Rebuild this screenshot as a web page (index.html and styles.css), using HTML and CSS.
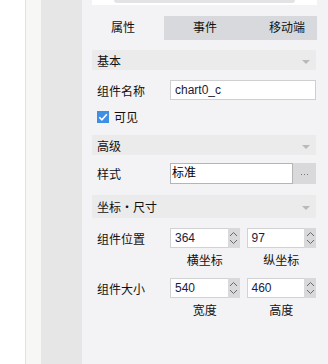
FILE: index.html
```html
<!DOCTYPE html>
<html>
<head>
<meta charset="utf-8">
<link rel="stylesheet" href="styles.css">
</head>
<body>
<div class="gutter"></div>
<div class="rail"></div>
<div class="side"></div>
<div class="panel">
  <div class="topbox"><div class="topbar"></div></div>
  <div class="tabs">
    <div class="tab active">属性</div>
    <div class="tab">事件</div>
    <div class="tab">移动端</div>
  </div>
  <div class="content">
    <div class="section h20"><span>基本</span><i class="tri"></i></div>
    <div class="row r-name">
      <div class="label">组件名称</div>
      <div class="input">chart0_c</div>
    </div>
    <div class="check-row">
      <span class="checkbox"><svg width="12" height="12" viewBox="0 0 12 12"><path d="M2.3 6.2 L4.9 8.8 L9.8 3.2" fill="none" stroke="#fff" stroke-width="1.6"/></svg></span>
      <span>可见</span>
    </div>
    <div class="section h20 s-adv"><span>高级</span><i class="tri"></i></div>
    <div class="row r-style">
      <div class="label">样式</div>
      <div class="input dark">标准</div>
      <div class="more"><i></i><i></i><i></i></div>
    </div>
    <div class="section h23 s-coord"><span>坐标・尺寸</span><i class="tri"></i></div>
    <div class="row r-num">
      <div class="label">组件位置</div>
      <div class="pair">
        <div class="num"><div class="val">364</div><div class="spin"><svg width="9" height="18" viewBox="0 0 9 18"><path d="M1 7 L4.5 3.5 L8 7 M1 11 L4.5 14.5 L8 11" fill="none" stroke="#6a6a6a" stroke-width="1"/></svg></div></div>
        <div class="num"><div class="val">97</div><div class="spin"><svg width="9" height="18" viewBox="0 0 9 18"><path d="M1 7 L4.5 3.5 L8 7 M1 11 L4.5 14.5 L8 11" fill="none" stroke="#6a6a6a" stroke-width="1"/></svg></div></div>
      </div>
    </div>
    <div class="caps"><span>横坐标</span><span>纵坐标</span></div>
    <div class="row r-num2">
      <div class="label">组件大小</div>
      <div class="pair">
        <div class="num"><div class="val">540</div><div class="spin"><svg width="9" height="18" viewBox="0 0 9 18"><path d="M1 7 L4.5 3.5 L8 7 M1 11 L4.5 14.5 L8 11" fill="none" stroke="#6a6a6a" stroke-width="1"/></svg></div></div>
        <div class="num"><div class="val">460</div><div class="spin"><svg width="9" height="18" viewBox="0 0 9 18"><path d="M1 7 L4.5 3.5 L8 7 M1 11 L4.5 14.5 L8 11" fill="none" stroke="#6a6a6a" stroke-width="1"/></svg></div></div>
      </div>
    </div>
    <div class="caps"><span>宽度</span><span>高度</span></div>
  </div>
</div>
</body>
</html>
```
FILE: styles.css
```css
html, body {
  margin: 0;
  padding: 0;
}
body {
  width: 328px;
  height: 364px;
  display: flex;
  overflow: hidden;
  font-family: "Liberation Sans", "Noto Sans CJK SC", sans-serif;
  font-size: 12px;
  color: #111;
  background: #fff;
}
.gutter {
  width: 25px;
  background: #fff;
}
.rail {
  width: 15px;
  border-left: 1px solid #e2e2de;
  background: #f7f7f5;
}
.side {
  width: 41px;
  background: #e6e6e6;
}
.panel {
  width: 235px;
  padding-right: 11px;
  background: #f3f3f5;
  display: flex;
  flex-direction: column;
}
.topbox {
  margin-left: 10px;
  height: 5px;
  background: #fff;
}
.topbar {
  margin-left: 22px;
  width: 181px;
  height: 3px;
  background: #e3e3e5;
  border-radius: 0 0 3px 3px;
}
.tabs {
  margin-top: 11px;
  height: 24px;
  display: flex;
  overflow: hidden;
}
.tab {
  flex: none;
  width: 82px;
  line-height: 24px;
  text-align: center;
  background: #d8d9dc;
}
.tab.active {
  background: #f3f3f5;
}
.content {
  padding: 10px 1px 0 10px;
  display: flex;
  flex-direction: column;
}
.section {
  background: #ebebeb;
  padding: 0 6px 0 5px;
  display: flex;
  align-items: center;
  justify-content: space-between;
}
.h20 { height: 20px; }
.h23 { height: 23px; }
.tri {
  width: 0;
  height: 0;
  border-left: 4px solid transparent;
  border-right: 4px solid transparent;
  border-top: 4px solid #b9b9b9;
  margin-top: 3px;
}
.row {
  display: flex;
  align-items: center;
  height: 20px;
}
.label {
  width: 73px;
  padding-left: 5px;
  flex: none;
}
.r-name { margin-top: 10px; }
.input {
  flex: 1;
  height: 18px;
  line-height: 18px;
  background: #fff;
  border: 1px solid #cfcfcf;
  padding-left: 4px;
  color: #1a1a33;
}
.input.dark {
  border-color: #b5b5b5;
  padding-left: 1px;
  color: #000;
}
.check-row {
  margin-top: 10px;
  height: 13px;
  display: flex;
  align-items: center;
  padding-left: 5px;
  gap: 5px;
}
.checkbox {
  width: 12px;
  height: 12px;
  background: #3f90e4;
  display: block;
}
.checkbox svg { display: block; }
.s-adv { margin-top: 12px; }
.r-style {
  margin-top: 8px;
  height: 21px;
}
.r-style .input {
  height: 19px;
  line-height: 19px;
}
.more {
  width: 23px;
  height: 21px;
  background: #d9d9dc;
  display: flex;
  align-items: center;
  justify-content: center;
  gap: 2px;
}
.more i {
  width: 1px;
  height: 1px;
  background: #777;
  margin-top: 1px;
}
.s-coord { margin-top: 11px; }
.r-num { margin-top: 10px; }
.r-num2 { margin-top: 7px; }
.pair {
  flex: 1;
  display: grid;
  grid-template-columns: 1fr 1fr;
  gap: 7px;
}
.num {
  display: flex;
  height: 20px;
}
.val {
  flex: 1;
  background: #fff;
  border: 1px solid #d2d2d2;
  border-right: none;
  line-height: 18px;
  padding-left: 4px;
  color: #1c1c40;
}
.spin {
  width: 12px;
  background: #d9d9dc;
  display: flex;
  align-items: center;
  justify-content: center;
}
.spin svg { display: block; }
.caps {
  margin-top: 3px;
  height: 20px;
  line-height: 20px;
  padding-left: 78px;
  display: grid;
  grid-template-columns: 1fr 1fr;
  gap: 7px;
  text-align: center;
}
```
